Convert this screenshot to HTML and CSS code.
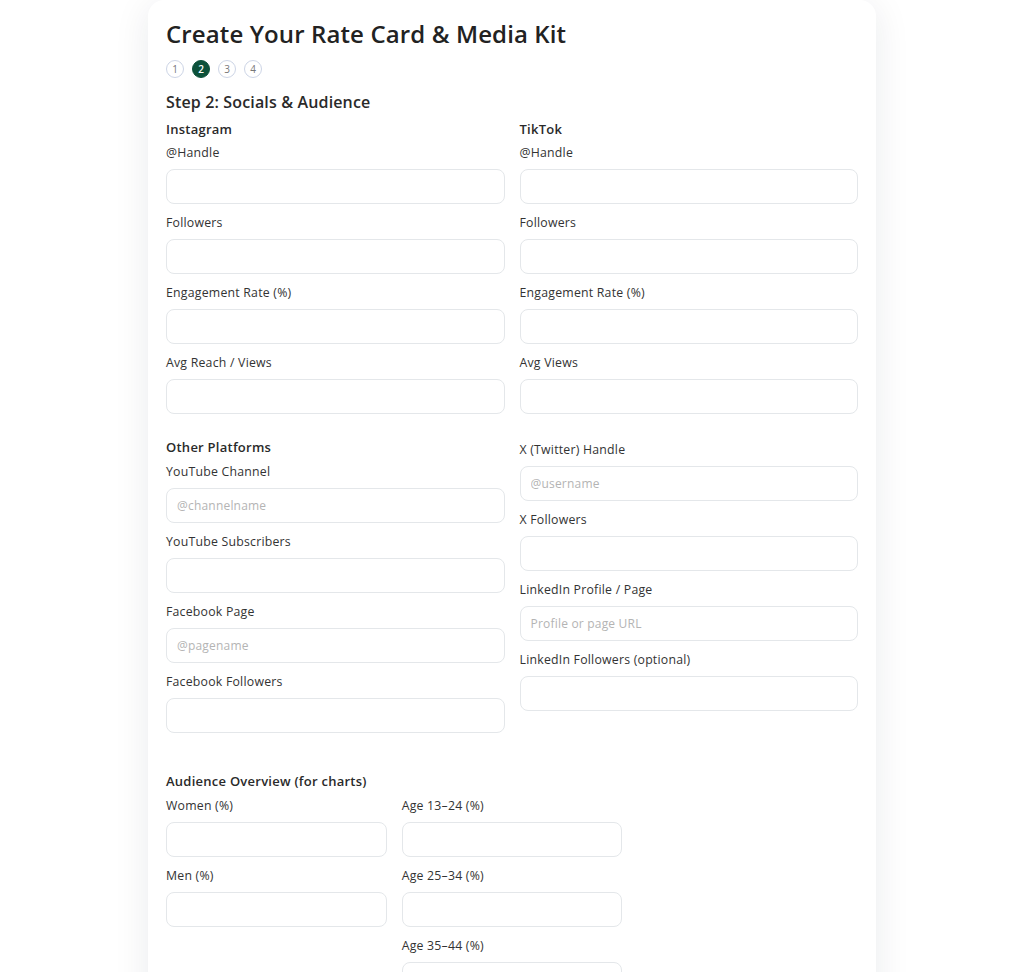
FILE: index.html
```html
<!DOCTYPE html>
<html lang="en">
<head>
<meta charset="utf-8">
<title>Create Your Rate Card &amp; Media Kit</title>
<link rel="stylesheet" href="styles.css">
</head>
<body>
<main class="card">
  <h1 class="title">Create Your Rate Card &amp; Media Kit</h1>
  <div class="steps">
    <span class="step">1</span>
    <span class="step active">2</span>
    <span class="step">3</span>
    <span class="step">4</span>
  </div>
  <h2 class="step-title">Step 2: Socials &amp; Audience</h2>

  <div class="grid two">
    <div class="col">
      <h3 class="group">Instagram</h3>
      <div class="field"><label>@Handle</label><input type="text"></div>
      <div class="field"><label>Followers</label><input type="text"></div>
      <div class="field"><label>Engagement Rate (%)</label><input type="text"></div>
      <div class="field"><label>Avg Reach / Views</label><input type="text"></div>
    </div>
    <div class="col">
      <h3 class="group">TikTok</h3>
      <div class="field"><label>@Handle</label><input type="text"></div>
      <div class="field"><label>Followers</label><input type="text"></div>
      <div class="field"><label>Engagement Rate (%)</label><input type="text"></div>
      <div class="field"><label>Avg Views</label><input type="text"></div>
    </div>
  </div>

  <div class="grid two section">
    <div class="col">
      <h3 class="group">Other Platforms</h3>
      <div class="field"><label>YouTube Channel</label><input type="text" placeholder="@channelname"></div>
      <div class="field"><label>YouTube Subscribers</label><input type="text"></div>
      <div class="field"><label>Facebook Page</label><input type="text" placeholder="@pagename"></div>
      <div class="field"><label>Facebook Followers</label><input type="text"></div>
    </div>
    <div class="col offset">
      <div class="field"><label>X (Twitter) Handle</label><input type="text" placeholder="@username"></div>
      <div class="field"><label>X Followers</label><input type="text"></div>
      <div class="field"><label>LinkedIn Profile / Page</label><input type="text" placeholder="Profile or page URL"></div>
      <div class="field"><label>LinkedIn Followers (optional)</label><input type="text"></div>
    </div>
  </div>

  <h3 class="group audience">Audience Overview (for charts)</h3>
  <div class="grid three">
    <div class="col">
      <div class="field"><label>Women (%)</label><input type="text"></div>
      <div class="field"><label>Men (%)</label><input type="text"></div>
    </div>
    <div class="col">
      <div class="field"><label>Age 13–24 (%)</label><input type="text"></div>
      <div class="field"><label>Age 25–34 (%)</label><input type="text"></div>
      <div class="field"><label>Age 35–44 (%)</label><input type="text"></div>
    </div>
    <div class="col"></div>
  </div>
</main>
</body>
</html>
```

FILE: styles.css
```css
* { box-sizing: border-box; }
html, body { margin: 0; padding: 0; background: #ffffff; }
body {
  font-family: "Open Sans", "DejaVu Sans", sans-serif;
  color: #2a2a2a;
}
.card {
  width: 728px;
  margin: 0 auto;
  background: #ffffff;
  border-radius: 16px;
  box-shadow: 0 6px 36px rgba(20, 30, 50, 0.09);
  padding: 18px 18px 40px;
  min-height: 1000px;
}
.title {
  margin: 0;
  font-size: 24px;
  line-height: 32px;
  font-weight: 600;
  letter-spacing: 0.12px;
  color: #222222;
}
.steps {
  display: flex;
  gap: 8px;
  margin-top: 10px;
}
.step {
  width: 18px;
  height: 18px;
  border-radius: 50%;
  border: 1px solid #cdd5e6;
  display: flex;
  align-items: center;
  justify-content: center;
  font-size: 10px;
  color: #777777;
}
.step.active {
  background: #0c513a;
  border-color: #0c513a;
  color: #ffffff;
  font-weight: 600;
}
.step-title {
  margin: 12px 0 5px;
  font-size: 16px;
  line-height: 24px;
  font-weight: 600;
  letter-spacing: 0.15px;
  color: #2a2a2a;
}
.group {
  margin: 0 0 5px;
  font-size: 13px;
  line-height: 20px;
  font-weight: 600;
  letter-spacing: 0.25px;
  color: #2a2a2a;
}
.section .group { margin-bottom: 6px; }
.grid { display: grid; column-gap: 15px; }
.grid.two { grid-template-columns: 1fr 1fr; }
.grid.three { grid-template-columns: 1fr 1fr 1fr; }
.section { margin-top: 13px; }
.col.offset { padding-top: 4px; }
.group.audience { margin-top: 28px; margin-bottom: 6px; }
.field { margin-bottom: 10px; }
.field label {
  display: block;
  font-size: 12.3px;
  line-height: 18px;
  letter-spacing: 0.22px;
  margin-bottom: 7px;
  color: #333333;
}
.field input {
  display: block;
  width: 100%;
  height: 35px;
  border: 1px solid #e4e7ea;
  border-radius: 8px;
  padding: 0 10px;
  font-family: inherit;
  font-size: 12px;
  letter-spacing: 0.2px;
  color: #333333;
  background: #ffffff;
  outline: none;
}
.field input::placeholder { color: #b4b4b4; }
```
